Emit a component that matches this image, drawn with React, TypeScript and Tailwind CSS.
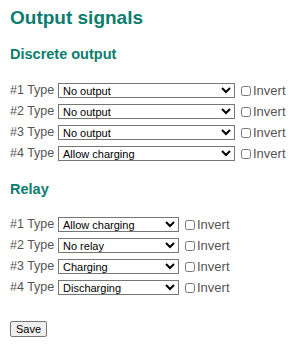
const discrete = ["No output", "No output", "No output", "Allow charging"];
const relay = ["Allow charging", "No relay", "Charging", "Discharging"];

function Row({ n, value, wide }: { n: number; value: string; wide: boolean }) {
  return (
    <div className="flex items-center h-[21px]">
      <span className="text-[12.5px] text-[#555] w-[48px]">#{n} Type</span>
      <select
        defaultValue={value}
        className={`${wide ? "w-[177px]" : "w-[121px]"} h-[15px] text-[11px] text-black border border-[#767676] bg-white pl-0 pr-[1px] leading-none`}
      >
        <option>{value}</option>
      </select>
      <label className="flex items-center ml-[6px] text-[13px] text-[#555]">
        <input type="checkbox" className="w-[10px] h-[10px] mr-[2px] m-0" />
        Invert
      </label>
    </div>
  );
}

export default function App() {
  return (
    <div className="w-[295px] h-[346px] bg-white pl-[10px] pt-[6px] font-['Liberation_Sans',Arial,sans-serif]">
      <h1 className="text-[19px] font-bold text-[#0b7d6e] leading-[24px]">Output signals</h1>
      <h2 className="text-[14.5px] font-bold text-[#0b7d6e] mt-[15px] leading-[18px]">Discrete output</h2>
      <div className="mt-[17px]">
        {discrete.map((v, i) => (
          <Row key={i} n={i + 1} value={v} wide />
        ))}
      </div>
      <h2 className="text-[14.5px] font-bold text-[#0b7d6e] mt-[16px] leading-[18px]">Relay</h2>
      <div className="mt-[16px]">
        {relay.map((v, i) => (
          <Row key={i} n={i + 1} value={v} wide={false} />
        ))}
      </div>
      <button className="mt-[23px] text-[11px] text-black border border-[#767676] bg-[#efefef] rounded-[2px] px-[5px] h-[16px] leading-none">
        Save
      </button>
    </div>
  );
}
